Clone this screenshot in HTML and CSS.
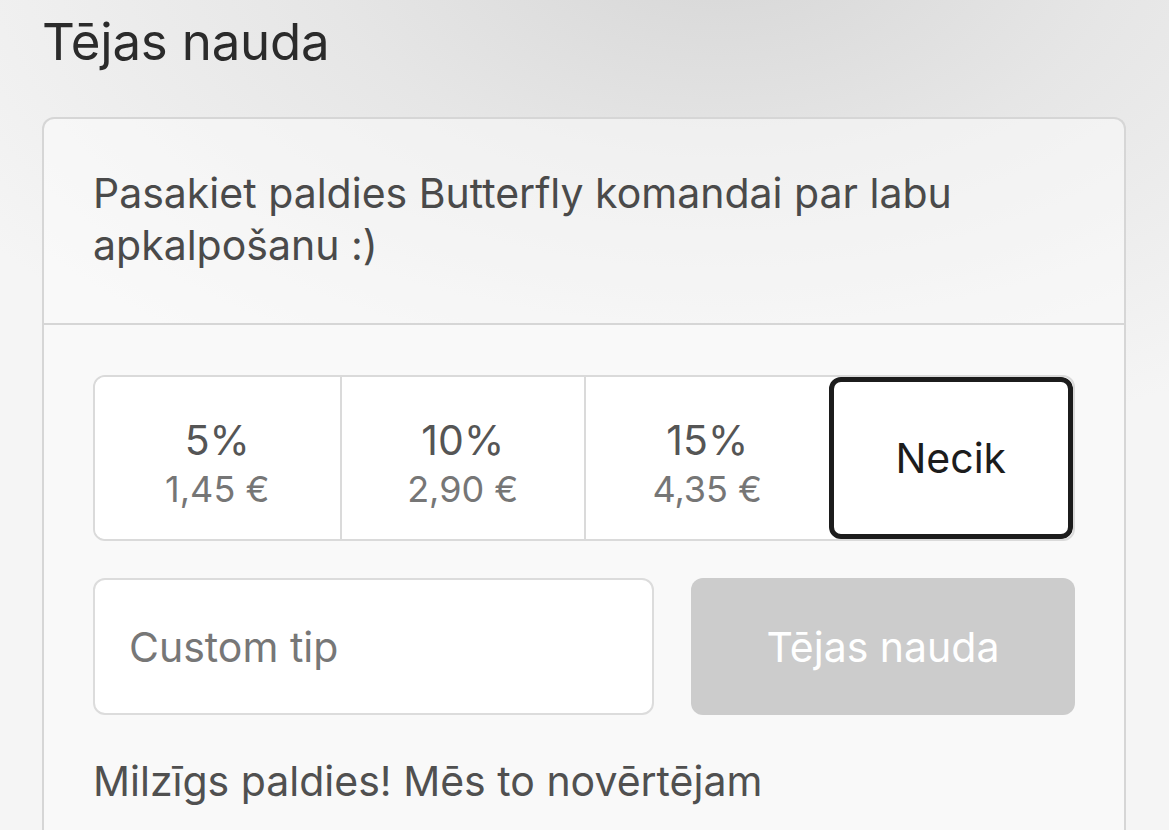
FILE: index.html
```html
<!DOCTYPE html>
<html lang="lv">
<head>
    <meta charset="UTF-8">
    <title>Tējas nauda</title>
    <link rel="stylesheet" href="styles.css">
</head>
<body>
<div class="page">
    <h1 class="title">Tējas nauda</h1>
    <div class="card">
        <div class="card-head">
            Pasakiet paldies Butterfly komandai par labu apkalpošanu :)
        </div>
        <div class="card-body">
            <div class="options">
                <button class="opt">
                    <span class="pct">5%</span>
                    <span class="sum">1,45 €</span>
                </button>
                <button class="opt">
                    <span class="pct">10%</span>
                    <span class="sum">2,90 €</span>
                </button>
                <button class="opt">
                    <span class="pct">15%</span>
                    <span class="sum">4,35 €</span>
                </button>
                <button class="opt selected">
                    <span class="none">Necik</span>
                </button>
            </div>
            <div class="custom">
                <input type="text" class="tip-input" placeholder="Custom tip">
                <button class="tip-btn" disabled>Tējas nauda</button>
            </div>
            <p class="thanks">Milzīgs paldies! Mēs to novērtējam</p>
        </div>
    </div>
</div>
</body>
</html>
```

FILE: styles.css
```css
html, body{
    margin: 0;
    height: 100%;
}
body{
    font-family: Inter, "Noto Sans", sans-serif;
    background: radial-gradient(ellipse 900px 520px at 720px -60px, #d6d6d6 0%, #e6e6e6 45%, #f5f5f5 100%);
    background-color: #f5f5f5;
    overflow: hidden;
}
.page{
    height: 100%;
    box-sizing: border-box;
    padding: 0 43px 0 42px;
    display: flex;
    flex-direction: column;
}
.title{
    margin: 0;
    padding-top: 11px;
    height: 117px;
    flex: none;
    box-sizing: border-box;
    font-size: 51px;
    line-height: 62px;
    font-weight: 400;
    color: #2b2b2b;
    letter-spacing: -0.2px;
}
.card{
    flex: 1;
    min-height: 0;
    overflow: hidden;
    border: 2px solid #d6d6d6;
    border-bottom: none;
    border-radius: 12px 12px 0 0;
    background: rgba(255,255,255,0.45);
}
.card-head{
    padding: 48px 130px 0 49px;
    height: 206px;
    box-sizing: border-box;
    font-size: 41px;
    line-height: 52px;
    color: #4a4a4a;
    border-bottom: 2px solid #d6d6d6;
}
.card-body{
    padding: 50px 49px 0;
    height: 100%;
    background: #f9f9f9;
}
.options{
    display: grid;
    grid-template-columns: repeat(4, 1fr);
    height: 166px;
    border: 2px solid #dadada;
    border-radius: 12px;
    background: #fff;
    overflow: hidden;
    box-sizing: border-box;
}
.opt{
    border: none;
    border-left: 2px solid #dadada;
    background: #fff;
    font-family: inherit;
    display: flex;
    flex-direction: column;
    align-items: center;
    justify-content: center;
    padding: 10px 0 0;
}
.opt:first-child{
    border-left: none;
}
.pct{
    font-size: 41px;
    color: #555;
    line-height: 52px;
}
.sum{
    font-size: 36px;
    color: #767676;
    line-height: 46px;
}
.opt.selected{
    border: 5px solid #1c1c1c;
    border-radius: 12px;
    padding: 0;
}
.none{
    font-size: 41px;
    color: #1c1c1c;
}
.custom{
    display: grid;
    grid-template-columns: 561px 1fr;
    gap: 37px;
    margin-top: 37px;
    height: 137px;
}
.tip-input{
    border: 2px solid #dcdcdc;
    border-radius: 12px;
    background: #fff;
    padding: 0 34px;
    font-family: inherit;
    font-size: 41px;
    color: #333;
    outline: none;
}
.tip-input::placeholder{
    color: #777;
}
.tip-btn{
    border: none;
    border-radius: 12px;
    background: #cccccc;
    color: #fff;
    font-family: inherit;
    font-size: 41px;
}
.thanks{
    margin: 40px 0 0;
    font-size: 41px;
    line-height: 52px;
    color: #505050;
}
```
